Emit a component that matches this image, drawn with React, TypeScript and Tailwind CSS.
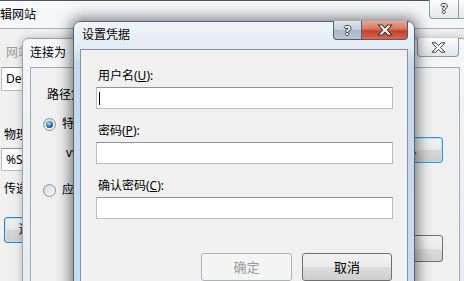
import React from 'react';

const HelpGlyph: React.FC<{ size?: number }> = ({ size = 13 }) => (
  <span
    className="font-bold leading-none text-white [text-shadow:-1px_0_#3a3a3a,1px_0_#3a3a3a,0_-1px_#3a3a3a,0_1px_#3a3a3a]"
    style={{ fontSize: size }}
  >
    ?
  </span>
);

const CloseGlyph: React.FC<{ w?: number; h?: number }> = ({ w = 15, h = 11 }) => (
  <svg width={w} height={h} viewBox="0 0 15 11">
    <path
      d="M1 0.8h3.8L7.5 3.6 10.2 0.8H14L9.5 5.5 14 10.2h-3.8L7.5 7.4 4.8 10.2H1l4.5-4.7z"
      fill="#ffffff"
      stroke="#3a3a3a"
      strokeWidth="1"
      strokeLinejoin="round"
    />
  </svg>
);

const Radio: React.FC<{ checked?: boolean }> = ({ checked }) => (
  <div className="flex h-[13px] w-[13px] shrink-0 items-center justify-center rounded-full border border-[#8e8f8f] bg-[linear-gradient(135deg,#d6d6d6,#fbfbfb)]">
    {checked && (
      <div className="h-[7px] w-[7px] rounded-full bg-[radial-gradient(circle_at_40%_35%,#a9dcf7,#2a6f9f_55%,#0f3d5e)]" />
    )}
  </div>
);

const TextBox: React.FC<{ className?: string; children?: React.ReactNode }> = ({ className = '', children }) => (
  <div className={`flex items-center border border-[#b9bdc3] border-t-[#8f949b] bg-white px-[4px] ${className}`}>
    {children}
  </div>
);

export default function App() {
  return (
    <div className="relative h-[281px] w-[464px] overflow-hidden bg-[#e9eef3] font-['Noto_Sans','Noto_Sans_CJK_SC',sans-serif] text-[12px] leading-[14px] text-black">
      {/* 编辑网站 — the window at the back */}
      <div className="absolute left-[-20px] top-0 h-[300px] w-[500px] rounded-t-[6px] border border-[#4d545c] bg-[linear-gradient(180deg,#f5f7f9,#e8edf2)] px-[7px]">
        <div className="flex h-[27px] items-center">编辑网站</div>
        <div className="absolute left-[448px] top-[-1px] flex h-[19px]">
          <div className="flex w-[30px] items-center justify-center rounded-bl-[4px] border border-t-0 border-[#8d98a4] bg-[linear-gradient(180deg,#fbfcfd,#e4e9ee)]">
            <HelpGlyph size={12} />
          </div>
          <div className="w-[44px] rounded-br-[4px] border border-l-0 border-t-0 border-[#8d98a4] bg-[linear-gradient(180deg,#fbfcfd,#e4e9ee)]" />
        </div>
        <div className="flex h-[270px] flex-col border border-[#a9b2bc] bg-[#f0f0f0] pl-[12px]">
          <div className="ml-[5px] mt-[17px] text-[#9a9a9a]">网站名称(S):</div>
          <TextBox className="mt-[7px] h-[24px] w-[300px]">Default Web Site</TextBox>
          <div className="ml-[3px] mt-[37px]">物理路径(P):</div>
          <TextBox className="mt-[6px] h-[23px] w-[300px]">%SystemDrive%\inetpub\wwwroot</TextBox>
          <div className="ml-[3px] mt-[11px]">传递身份验证</div>
          <div className="ml-[3px] mt-[21px] flex h-[26px] w-[90px] items-center justify-center rounded-[3px] border border-[#3c7fb1] bg-[linear-gradient(180deg,#f2f2f2,#e6e6e6_50%,#d6d6d6_51%,#cfcfcf)] shadow-[inset_0_0_0_1px_#b9e5fb]">
            连接为(C)...
          </div>
        </div>
      </div>

      {/* 连接为 */}
      <div className="absolute left-[22px] top-[38px] h-[270px] w-[446px] rounded-t-[6px] border border-[#9aa5b1] bg-[linear-gradient(180deg,#f4f6f8,#e5eaef)] px-[7px] shadow-[0_0_8px_rgba(0,0,0,0.25)]">
        <div className="flex h-[28px] items-center">连接为</div>
        <div className="absolute right-[8px] top-[-1px] flex h-[19px] w-[42px] items-center justify-center rounded-b-[4px] border border-t-0 border-[#8a96a3] bg-[linear-gradient(180deg,#fbfcfd,#e1e6eb)]">
          <CloseGlyph />
        </div>
        <div className="flex h-[240px] border border-[#a3acb6] bg-[#f0f0f0]">
          <div className="flex flex-1 flex-col pl-[16px]">
            <div className="mt-[20px]">路径凭据:</div>
            <div className="ml-[-4px] mt-[15px] flex items-center gap-[6px]">
              <Radio checked />
              <span>特定用户(S):</span>
            </div>
            <div className="ml-[19px] mt-[15px]">vvv</div>
            <div className="ml-[-4px] mt-[23px] flex items-center gap-[6px]">
              <Radio />
              <span>应用程序用户(通过身份验证)(A)</span>
            </div>
          </div>
          <div className="mr-[16px] flex w-[100px] flex-col">
            <div className="mt-[69px] flex h-[26px] items-center justify-center rounded-[3px] border border-[#3c9ad0] bg-[linear-gradient(180deg,#f2f2f2,#e8e8e8_50%,#d8d8d8_51%,#cfcfcf)] shadow-[inset_0_0_0_1px_#a9e0fa]">
              设置(E)...
            </div>
            <div className="mt-[72px] flex h-[27px] items-center justify-center rounded-[3px] border border-[#707070] bg-[linear-gradient(180deg,#f2f2f2,#ebebeb_50%,#dddddd_51%,#cfcfcf)]">
              确定
            </div>
          </div>
        </div>
      </div>

      {/* 设置凭据 — active dialog */}
      <div className="absolute left-[73px] top-[21px] h-[290px] w-[342px] rounded-t-[7px] border border-[#52657a] bg-[linear-gradient(180deg,#f1f5f9_0px,#e1e9f2_27px,#c6d9ec_40px,#c9dcef)] px-[6px] shadow-[0_0_14px_3px_rgba(0,0,0,0.5)]">
        <div className="flex h-[27px] items-center pb-[1px] pl-[2px]">设置凭据</div>
        <div className="absolute right-[6px] top-[-1px] flex h-[19px]">
          <div className="flex w-[28px] items-center justify-center rounded-bl-[4px] border border-r-0 border-t-0 border-[#4f5f70] bg-[linear-gradient(180deg,#dfe6ee,#c3ceda_50%,#a9b7c6_51%,#b7c5d3)]">
            <HelpGlyph />
          </div>
          <div className="flex w-[47px] items-center justify-center rounded-br-[4px] border border-t-0 border-[#4f5f70] bg-[linear-gradient(180deg,#e9a898,#d7755f_45%,#c4402b_55%,#d56a50)]">
            <CloseGlyph w={16} h={12} />
          </div>
        </div>
        <div className="flex h-[250px] flex-col border border-[#8394a6] bg-[#f0f0f0] pl-[15px] pr-[14px] pt-[19px]">
          <div className="ml-[2px]">
            用户名(<span className="underline">U</span>):
          </div>
          <TextBox className="mt-[4px] h-[22px] pl-[2px]">
            <div className="h-[13px] w-px bg-black" />
          </TextBox>
          <div className="ml-[2px] mt-[15px]">
            密码(<span className="underline">P</span>):
          </div>
          <TextBox className="mt-[4px] h-[22px]" />
          <div className="ml-[2px] mt-[15px]">
            确认密码(<span className="underline">C</span>):
          </div>
          <TextBox className="mt-[4px] h-[22px]" />
          <div className="mr-[1px] mt-[34px] flex justify-end gap-[10px]">
            <div className="flex h-[28px] w-[91px] items-center justify-center rounded-[3px] border border-[#adb2b5] bg-[#f4f4f4] text-[13px] text-[#9a9a9a]">
              确定
            </div>
            <div className="flex h-[28px] w-[90px] items-center justify-center rounded-[3px] border border-[#707070] bg-[linear-gradient(180deg,#f2f2f2,#ebebeb_50%,#dddddd_51%,#cfcfcf)] text-[13px]">
              取消
            </div>
          </div>
        </div>
      </div>
    </div>
  );
}
